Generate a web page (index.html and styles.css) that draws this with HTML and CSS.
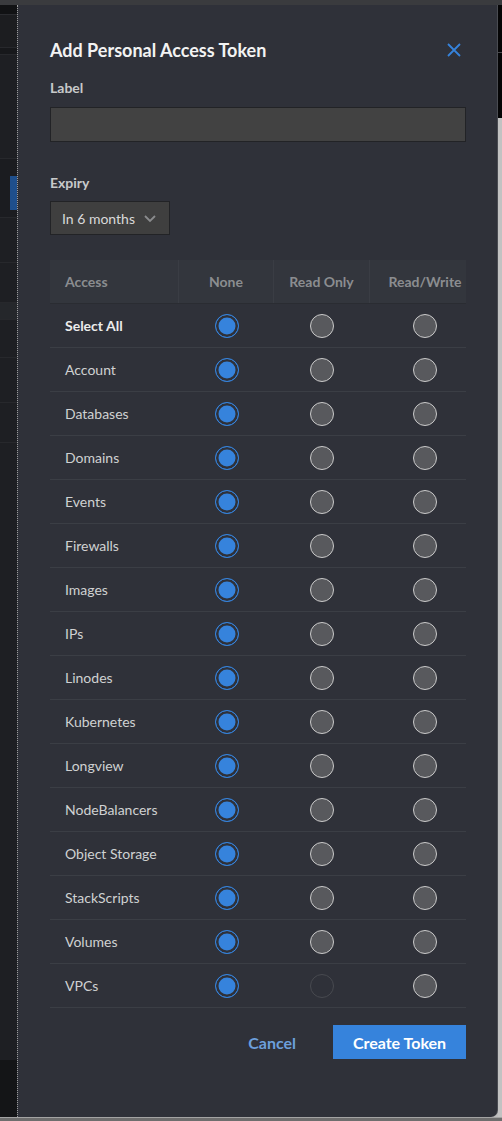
FILE: index.html
```html
<!DOCTYPE html>
<html lang="en">
<head>
<meta charset="utf-8">
<title>Add Personal Access Token</title>
<link rel="stylesheet" href="styles.css">
</head>
<body>
<div class="screen">
  <div class="topbar"></div>
  <div class="main">
    <div class="sidebar">
      <div class="band b1"></div>
      <div class="band b2"></div>
      <div class="band b3"></div>
      <div class="band b4"></div>
      <div class="band b5"><div class="activebar"></div></div>
      <div class="band b6"></div>
      <div class="band b7"></div>
      <div class="band b8"></div>
      <div class="band b9"></div>
      <div class="band b10"></div>
      <div class="band b11"></div>
      <div class="band b12"></div>
      <div class="band b13"></div>
    </div>
    <div class="drawer">
      <div class="title-row">
        <h2 class="title">Add Personal Access Token</h2>
        <button class="close" aria-label="Close">
          <svg width="14" height="14" viewBox="0 0 14 14"><path d="M1 1 L13 13 M13 1 L1 13" stroke="#3683dc" stroke-width="1.8" fill="none"/></svg>
        </button>
      </div>
      <label class="field-label">Label</label>
      <div class="input"></div>
      <label class="field-label expiry-label">Expiry</label>
      <div class="select">
        <span>In 6 months</span>
        <svg width="12" height="8" viewBox="0 0 12 8"><path d="M1 1 L6 6 L11 1" stroke="#8a8b8d" stroke-width="1.8" fill="none"/></svg>
      </div>
      <div class="table">
        <div class="row head">
          <div class="cell name">Access</div>
          <div class="cell">None</div>
          <div class="cell">Read Only</div>
          <div class="cell last">Read/Write</div>
        </div>
        <div class="row"><div class="cell name strong">Select All</div><div class="cell"><span class="radio on"></span></div><div class="cell"><span class="radio off"></span></div><div class="cell last"><span class="radio off"></span></div></div>
        <div class="row"><div class="cell name">Account</div><div class="cell"><span class="radio on"></span></div><div class="cell"><span class="radio off"></span></div><div class="cell last"><span class="radio off"></span></div></div>
        <div class="row"><div class="cell name">Databases</div><div class="cell"><span class="radio on"></span></div><div class="cell"><span class="radio off"></span></div><div class="cell last"><span class="radio off"></span></div></div>
        <div class="row"><div class="cell name">Domains</div><div class="cell"><span class="radio on"></span></div><div class="cell"><span class="radio off"></span></div><div class="cell last"><span class="radio off"></span></div></div>
        <div class="row"><div class="cell name">Events</div><div class="cell"><span class="radio on"></span></div><div class="cell"><span class="radio off"></span></div><div class="cell last"><span class="radio off"></span></div></div>
        <div class="row"><div class="cell name">Firewalls</div><div class="cell"><span class="radio on"></span></div><div class="cell"><span class="radio off"></span></div><div class="cell last"><span class="radio off"></span></div></div>
        <div class="row"><div class="cell name">Images</div><div class="cell"><span class="radio on"></span></div><div class="cell"><span class="radio off"></span></div><div class="cell last"><span class="radio off"></span></div></div>
        <div class="row"><div class="cell name">IPs</div><div class="cell"><span class="radio on"></span></div><div class="cell"><span class="radio off"></span></div><div class="cell last"><span class="radio off"></span></div></div>
        <div class="row"><div class="cell name">Linodes</div><div class="cell"><span class="radio on"></span></div><div class="cell"><span class="radio off"></span></div><div class="cell last"><span class="radio off"></span></div></div>
        <div class="row"><div class="cell name">Kubernetes</div><div class="cell"><span class="radio on"></span></div><div class="cell"><span class="radio off"></span></div><div class="cell last"><span class="radio off"></span></div></div>
        <div class="row"><div class="cell name">Longview</div><div class="cell"><span class="radio on"></span></div><div class="cell"><span class="radio off"></span></div><div class="cell last"><span class="radio off"></span></div></div>
        <div class="row"><div class="cell name">NodeBalancers</div><div class="cell"><span class="radio on"></span></div><div class="cell"><span class="radio off"></span></div><div class="cell last"><span class="radio off"></span></div></div>
        <div class="row"><div class="cell name">Object Storage</div><div class="cell"><span class="radio on"></span></div><div class="cell"><span class="radio off"></span></div><div class="cell last"><span class="radio off"></span></div></div>
        <div class="row"><div class="cell name">StackScripts</div><div class="cell"><span class="radio on"></span></div><div class="cell"><span class="radio off"></span></div><div class="cell last"><span class="radio off"></span></div></div>
        <div class="row"><div class="cell name">Volumes</div><div class="cell"><span class="radio on"></span></div><div class="cell"><span class="radio off"></span></div><div class="cell last"><span class="radio off"></span></div></div>
        <div class="row"><div class="cell name">VPCs</div><div class="cell"><span class="radio on"></span></div><div class="cell"><span class="radio dis"></span></div><div class="cell last"><span class="radio off"></span></div></div>
      </div>
      <div class="actions">
        <button class="btn-cancel">Cancel</button>
        <button class="btn-primary">Create Token</button>
      </div>
    </div>
    <div class="edge">
      <div class="edge-top"></div>
      <div class="edge-mid"></div>
      <div class="edge-low"></div>
    </div>
  </div>
  <div class="bottombar"></div>
</div>
</body>
</html>
```

FILE: styles.css
```css
* { box-sizing: border-box; }
html, body { margin: 0; padding: 0; }
body {
  background: #1c1d21;
  font-family: Lato, "Noto Sans", sans-serif;
  width: 502px;
  height: 1121px;
  overflow: hidden;
}
.screen { display: flex; flex-direction: column; height: 1121px; }
.topbar { height: 5px; background: #3a3b3e; flex: none; }
.main { flex: 1; display: flex; background: #bdbdbd; min-height: 0; }
.bottombar { height: 4px; flex: none; background: #6e6e6e; border-top: 1px solid #a3a3a3; }

/* left background strip */
.sidebar { width: 17px; flex: none; display: flex; flex-direction: column; background: #151618; }
.band { flex: none; border-bottom: 1px solid #27282c; background: #1e1f23; }
.b1 { height: 10px; background: #111214; border-bottom-color: #2a2b2f; }
.b2 { height: 33px; background: #1c1d20; }
.b3 { height: 7px; background: #17181b; }
.b4 { height: 104px; }
.b5 { height: 59px; background: #1b1c20; }
.activebar { width: 7px; height: 34px; margin: 17px 0 0 10px; background: #1f4f8c; }
.b6 { height: 45px; }
.b7 { height: 40px; }
.b8 { height: 17px; background: #25272b; }
.b9 { height: 38px; }
.b10 { height: 45px; }
.b11 { height: 40px; }
.b12 { height: 617px; border-bottom: none; }
.b13 { flex: 1; background: #141517; border-bottom: none; }

/* right edge */
.edge { width: 4px; flex: none; display: flex; flex-direction: column; }
.edge-top { height: 48px; background: #050506; border-bottom: 1px solid #4a4b4f; }
.edge-mid { height: 65px; background: #050506; }
.edge-low { flex: 1; background: #c2c2c2; }

/* drawer */
.drawer {
  width: 481px;
  flex: none;
  background: #2f3139;
  border-left: 1px dotted #9c9c9c;
  border-right: 1px solid #4a4c52;
  border-bottom-right-radius: 7px;
  padding: 33px 31px 0 32px;
  display: flex;
  flex-direction: column;
}
.title-row { display: flex; align-items: center; justify-content: space-between; height: 24px; }
.title { margin: 0; font-size: 18px; font-weight: 700; color: #f3f3f3; line-height: 24px; }
.close { background: none; border: 0; padding: 0; margin-right: 5px; width: 14px; height: 14px; display: flex; }

.field-label { display: block; font-size: 14px; font-weight: 700; color: #c8c9ca; line-height: 18px; margin-top: 17px; }
.expiry-label { margin-top: 32px; }
.input { margin-top: 10px; height: 35px; background: #424242; border: 1px solid #222326; }
.select {
  margin-top: 9px;
  width: 120px;
  height: 34px;
  background: #3f3f3f;
  border: 1px solid #222326;
  display: flex;
  align-items: center;
  padding: 0 0 0 11px;
  gap: 9px;
  font-size: 14px;
  color: #d9d9d9;
}
.select svg { margin-top: 1px; }

/* table */
.table { margin-top: 25px; width: 416px; }
.row { display: grid; grid-template-columns: 129px 95px 96px 96px; height: 44px; border-bottom: 1px solid #3b3e45; }
.cell { display: flex; align-items: center; justify-content: center; font-size: 14px; color: #d0d1d2; }
.cell.name { justify-content: flex-start; padding-left: 15px; }
.cell.last { padding-left: 14px; }
.cell.strong { font-weight: 700; color: #ececec; }
.row.head { background: #33363d; border-bottom: 1px solid #2a2c32; }
.row.head .cell { color: #8b8d90; font-weight: 700; border-right: 1px solid #3a3d44; }
.row.head .cell.last { border-right: none; }

.radio { display: block; width: 24px; height: 24px; border-radius: 50%; }
.radio.on { background: #3683dc; border: 1.5px solid #3683dc; box-shadow: inset 0 0 0 2.5px #2f3139; }
.radio.off { background: #58595d; border: 1.5px solid #cacaca; }
.radio.dis { background: #2f3139; border: 1px solid #484a50; }

/* actions */
.actions { display: flex; justify-content: flex-end; align-items: center; margin-top: 17px; gap: 21px; }
.btn-cancel {
  background: none; border: 0; padding: 0 16px; height: 34px;
  font-family: inherit; font-size: 16px; font-weight: 700; color: #6c9fdc;
}
.btn-primary {
  background: #3683dc; border: 0; height: 34px; width: 133px; padding: 0;
  font-family: inherit; font-size: 16px; font-weight: 700; color: #ffffff;
}
```
